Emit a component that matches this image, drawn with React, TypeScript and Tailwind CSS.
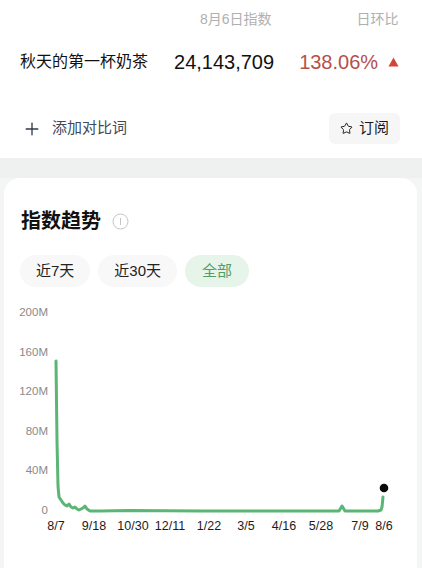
import { Plus, Star } from "lucide-react";

const yTicks = [
  { label: "200M", y: 312 },
  { label: "160M", y: 352 },
  { label: "120M", y: 391 },
  { label: "80M", y: 431 },
  { label: "40M", y: 470 },
  { label: "0", y: 510 },
];

const xTicks = [
  { label: "8/7", x: 56 },
  { label: "9/18", x: 94 },
  { label: "10/30", x: 133 },
  { label: "12/11", x: 170 },
  { label: "1/22", x: 209 },
  { label: "3/5", x: 246 },
  { label: "4/16", x: 284 },
  { label: "5/28", x: 321 },
  { label: "7/9", x: 360 },
  { label: "8/6", x: 384 },
];

const line = [
  [56, 360], [57, 440], [58, 485], [59, 496], [61, 499], [63, 502], [65, 504],
  [67, 505], [69, 503], [71, 506], [73, 507], [75, 506], [77, 508], [79, 509],
  [81, 508], [83, 507], [85, 505], [87, 508], [90, 510], [100, 510], [130, 509.5],
  [200, 510], [300, 510], [339, 510], [342, 505], [345, 510], [378, 510],
  [381, 509], [382, 506], [383, 496],
]
  .map((p, i) => (i === 0 ? "M" : "L") + p[0] + " " + p[1])
  .join(" ");

function TrendChart() {
  return (
    <svg
      width="413"
      height="245"
      viewBox="4 295 413 245"
      className="block"
      style={{ fontFamily: '"Liberation Sans", Arial, sans-serif' }}
    >
      {yTicks.map((t) => (
        <text key={t.label} x="48" y={t.y} textAnchor="end" dominantBaseline="middle" fontSize="11.5" fill="#8a8a8a">
          {t.label}
        </text>
      ))}
      {xTicks.map((t) => (
        <text key={t.label} x={t.x} y="526" textAnchor="middle" dominantBaseline="middle" fontSize="12.5" fill="#1c1c1c">
          {t.label}
        </text>
      ))}
      <path d={line} fill="none" stroke="#5bb574" strokeWidth="3" strokeLinejoin="round" strokeLinecap="round" />
      <circle cx="384" cy="487" r="4.3" fill="#0a0a0a" />
    </svg>
  );
}

export default function App() {
  return (
    <div
      className="w-[422px] h-[568px] overflow-hidden bg-[#f4f5f5] flex flex-col"
      style={{ fontFamily: '"Liberation Sans", "Noto Sans CJK SC", sans-serif' }}
    >
      <div className="bg-white pb-[14px]">
        <div className="flex items-center h-5 mt-[9px] text-[14px] text-[#b0b0b0]">
          <span className="ml-[200px]">8月6日指数</span>
          <span className="ml-[85px]">日环比</span>
        </div>
        <div className="flex items-center h-7 mt-[19px]">
          <span className="ml-[20px] text-[16px] text-[#111]">秋天的第一杯奶茶</span>
          <span className="ml-[26px] text-[20px] text-[#111]">24,143,709</span>
          <span className="ml-[25px] text-[20px] text-[#b5504d]">138.06%</span>
          <svg width="11" height="10" viewBox="0 0 11 10" className="ml-[10px]">
            <path d="M5.5 0.5 L10.5 9.5 L0.5 9.5 Z" fill="#d3423b" />
          </svg>
        </div>
        <div className="flex items-center justify-between mt-[37px] pl-[22px] pr-[22px]">
          <div className="flex items-center gap-[10px] text-[15px] text-[#3e4a5a]">
            <Plus size={20} strokeWidth={1.6} color="#2e3a4a" />
            <span>添加对比词</span>
          </div>
          <div className="flex items-center gap-[6px] h-[31px] px-[11px] bg-[#f6f6f6] rounded-md text-[15px] text-[#1a1a1a]">
            <Star size={13} strokeWidth={1.8} color="#1a1a1a" />
            <span>订阅</span>
          </div>
        </div>
      </div>
      <div className="h-[20px] bg-[#eff1f1]" />
      <div className="flex-1 mx-[4px] mr-[5px] bg-white rounded-t-[16px] pt-[29px]">
        <div className="flex items-center pl-[17px] h-7 gap-[11px]">
          <span className="text-[20px] font-bold text-[#111]">指数趋势</span>
          <svg width="17" height="17" viewBox="0 0 17 17">
            <circle cx="8.5" cy="8.5" r="7.5" fill="none" stroke="#c4c4c4" strokeWidth="1" />
            <path d="M8.5 5 V12" stroke="#c4c4c4" strokeWidth="1" />
          </svg>
        </div>
        <div className="flex items-center gap-[8px] pl-[16px] mt-[20px]">
          <span className="h-8 px-[16px] flex items-center rounded-full bg-[#f8f8f8] text-[15px] text-[#222]">近7天</span>
          <span className="h-8 px-[16px] flex items-center rounded-full bg-[#f8f8f8] text-[15px] text-[#222]">近30天</span>
          <span className="h-8 px-[17px] flex items-center rounded-full bg-[#e6f4ea] text-[15px] text-[#4f9e64]">全部</span>
        </div>
        <div className="mt-[9px]">
          <TrendChart />
        </div>
      </div>
    </div>
  );
}
